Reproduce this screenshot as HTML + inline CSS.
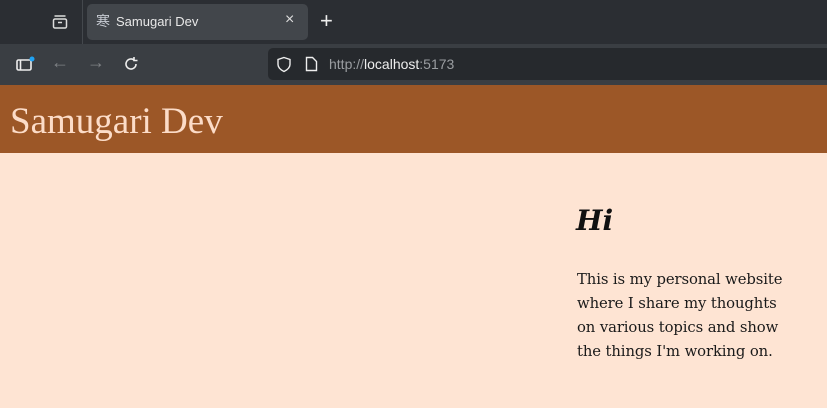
<!DOCTYPE html>
<html><head><style>
*{margin:0;padding:0;box-sizing:border-box}
body{width:827px;height:408px;overflow:hidden;background:#fee4d3;font-family:"Liberation Sans",sans-serif;position:relative}
.tabs{position:absolute;left:0;top:0;width:827px;height:44px;background:#2b2e33}
.sep{position:absolute;left:82px;top:0;width:1px;height:44px;background:#44484d}
.tab{position:absolute;left:87px;top:4px;width:221px;height:36px;background:#42464b;border-radius:5px;color:#e8e8e8;font-size:13px}
.tool{position:absolute;left:0;top:44px;width:827px;height:41px;background:#3a3e43}
.url{position:absolute;left:268px;top:4px;width:570px;height:32px;background:#26292d;border-radius:5px;color:#9a9da1;font-size:14px}
.hdr{position:absolute;left:0;top:85px;width:827px;height:68px;background:#9c5727;color:#fcdcc8;font-family:"Liberation Serif",serif;font-size:37px;padding:15px 0 0 10px}
.hi{position:absolute;left:576px;top:204px;font-family:"DejaVu Serif",serif;font-style:italic;font-weight:bold;font-size:28px;color:#111}
.p{position:absolute;left:577px;top:268px;width:212px;font-family:"DejaVu Serif","Liberation Serif",serif;font-size:14.8px;line-height:24px;color:#1a1a1a;letter-spacing:-0.1px}
</style></head><body>
<div class="tabs">
 <svg style="position:absolute;left:52px;top:14px" width="16" height="16" fill="none" stroke="#ddd" stroke-width="1.5"><rect x="1.5" y="5" width="13" height="9" rx="1.5"/><path d="M2.5 2h11M6 8.5h4"/></svg>
 <div class="sep"></div>
 <div class="tab">
  <span style="position:absolute;left:9px;top:9px;color:#c8ccd4;font-size:14px;font-family:'Noto Sans CJK JP',sans-serif;line-height:16px">寒</span>
  <span style="position:absolute;left:29px;top:10px">Samugari Dev</span>
  <span style="position:absolute;left:198px;top:7px;font-size:16px;color:#ddd">×</span>
 </div>
 <span style="position:absolute;left:320px;top:9px;color:#eee;font-size:22px;line-height:24px">+</span>
</div>
<div class="tool">
 <svg style="position:absolute;left:16px;top:12px" width="20" height="16" fill="none" stroke="#eee" stroke-width="1.6"><rect x="1" y="4" width="14" height="10" rx="1.5"/><path d="M4.5 4v10"/><circle cx="16" cy="3" r="2.5" fill="#1fa2f3" stroke="none"/></svg>
 <span style="position:absolute;left:51px;top:8px;color:#7f8286;font-size:18px">←</span>
 <span style="position:absolute;left:87px;top:8px;color:#7f8286;font-size:18px">→</span>
 <svg style="position:absolute;left:123px;top:12px" width="16" height="16" fill="none" stroke="#eee" stroke-width="1.6"><path d="M13 8a5 5 0 1 1-2-4M11 1v3.5h3.5"/></svg>
 <div class="url">
  <svg style="position:absolute;left:8px;top:8px" width="16" height="17" fill="none" stroke="#eee" stroke-width="1.4"><path d="M8 1.5l6 2v5c0 3.5-3 5.5-6 7-3-1.5-6-3.5-6-7v-5z"/></svg>
  <svg style="position:absolute;left:37px;top:8px" width="13" height="16" fill="none" stroke="#eee" stroke-width="1.4"><path d="M1.5 1.5h6l4 4v9h-10z"/></svg>
  <span style="position:absolute;left:61px;top:8px">http://<span style="color:#eee">localhost</span>:5173</span>
 </div>
</div>
<div class="hdr">Samugari Dev</div>
<div class="hi">Hi</div>
<div class="p">This is my personal website where I share my thoughts on various topics and show the things I'm working on.</div>
</body></html>
